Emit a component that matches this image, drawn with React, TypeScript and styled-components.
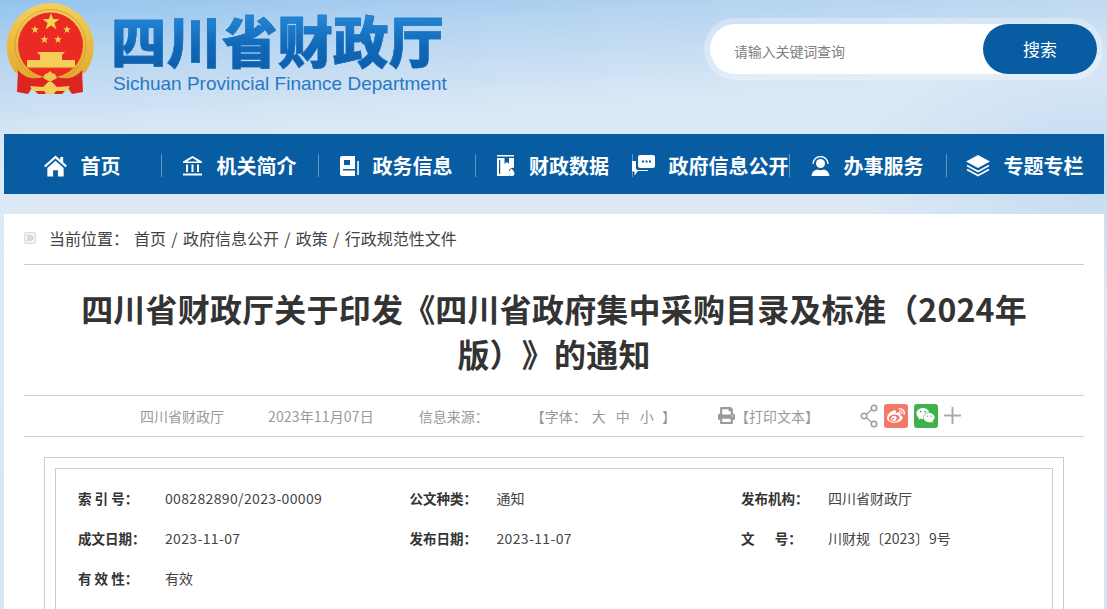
import React from "react";
import styled, { createGlobalStyle } from "styled-components";
import { FaWeibo, FaWeixin, FaPrint } from "react-icons/fa";

const GlobalStyle = createGlobalStyle`
  html, body {
    margin: 0;
    height: 100%;
    overflow: hidden;
  }
  body {
    font-family: "Noto Sans CJK SC", "Liberation Sans", sans-serif;
    text-spacing-trim: space-all;
    background:
      radial-gradient(ellipse 260px 120px at 1107px 170px, rgba(190, 216, 241, 0.9), rgba(190, 216, 241, 0) 100%),
      linear-gradient(176deg, #93c4ee 0%, #b5d4f0 8%, #dae8f6 21%, #dde9f5 34%, #d6e5f4 100%);
    background-repeat: no-repeat;
  }
`;

const navItems = [
  { label: "首页", icon: "home" },
  { label: "机关简介", icon: "bank" },
  { label: "政务信息", icon: "book" },
  { label: "财政数据", icon: "data" },
  { label: "政府信息公开", icon: "chat" },
  { label: "办事服务", icon: "user" },
  { label: "专题专栏", icon: "layers" },
];

const NavIcon = ({ name }: { name: string }) => {
  switch (name) {
    case "home":
      return (
        <svg width="23" height="22" viewBox="0 0 24 22" fill="#fff">
          <path d="M12 0 L17 4.5 V1.5 H20 V7.2 L24 10.8 L22.4 12.4 L12 3.2 L1.6 12.4 L0 10.8 Z" />
          <path d="M12 5.6 L20.5 13 V22 H14.5 V15.5 H9.5 V22 H3.5 V13 Z" />
        </svg>
      );
    case "bank":
      return (
        <svg width="21" height="20" viewBox="0 0 21 20" fill="#fff">
          <path d="M10.5 0 L20 5.5 V7 H1 V5.5 Z M10.5 2 L5.2 5.4 H15.8 Z" fillRule="evenodd" />
          <rect x="4" y="8.5" width="2" height="7.5" />
          <rect x="9.5" y="8.5" width="2" height="7.5" />
          <rect x="15" y="8.5" width="2" height="7.5" />
          <rect x="1" y="17.5" width="19" height="2" />
        </svg>
      );
    case "book":
      return (
        <svg width="19" height="20" viewBox="0 0 19 20" fill="#fff">
          <path
            d="M2 0 H15 V20 H2 A2 2 0 0 1 0 18 V2 A2 2 0 0 1 2 0 Z M4 4 V9 H10 V4 Z M3 13 V14.5 H15 V13 Z"
            fillRule="evenodd"
          />
          <rect x="17.3" y="5" width="1.5" height="14" />
        </svg>
      );
    case "data":
      return (
        <svg width="18" height="21" viewBox="0 0 18 21" fill="#fff">
          <rect x="0" y="0" width="17" height="1.5" />
          <path d="M0 3 H7.5 V9 L10 7 L12 9 V3 H17 V13 A4 4 0 0 0 12 18 V21 H0 Z M2 5 V19 H3.2 V5 Z" fillRule="evenodd" />
          <path d="M14.5 13.5 C16 15.5 17.5 16.5 17.5 18.4 A3 2.7 0 0 1 11.5 18.4 C11.5 16.5 13 15.5 14.5 13.5 Z" />
        </svg>
      );
    case "chat":
      return (
        <svg width="23" height="21" viewBox="0 0 23 21" fill="#fff">
          <path
            d="M8 0 H21 A2 2 0 0 1 23 2 V11 A2 2 0 0 1 21 13 H8 A2 2 0 0 1 6 11 V2 A2 2 0 0 1 8 0 Z M10 5.5 V7.5 H12 V5.5 Z M13.5 5.5 V7.5 H15.5 V5.5 Z M17 5.5 V7.5 H19 V5.5 Z"
            fillRule="evenodd"
          />
          <path d="M0 6 H4 V13 A2 2 0 0 0 6 15 H16 V16 H6 L2.5 20.5 V16.5 H0 Z" />
        </svg>
      );
    case "user":
      return (
        <svg width="19" height="20" viewBox="0 0 19 20" fill="#fff">
          <circle cx="9.5" cy="7.5" r="4.5" />
          <path d="M2 8 A7.5 7.5 0 0 1 17 8" fill="none" stroke="#fff" strokeWidth="1.3" />
          <path d="M0.5 20 C1 15.5 4 14 6.5 13.5 C8 14.6 11 14.6 12.5 13.5 C15 14 18 15.5 18.5 20 Z" />
        </svg>
      );
    default:
      return (
        <svg width="24" height="22" viewBox="0 0 24 22" fill="#fff">
          <path d="M12 0 L24 6.5 L12 13 L0 6.5 Z" />
          <path d="M1 10.5 L12 16.5 L23 10.5" fill="none" stroke="#fff" strokeWidth="1.6" />
          <path d="M1 14.5 L12 20.5 L23 14.5" fill="none" stroke="#fff" strokeWidth="1.6" />
        </svg>
      );
  }
};

const Star = ({ cx, cy, r }: { cx: number; cy: number; r: number }) => {
  const pts: string[] = [];
  for (let i = 0; i < 10; i++) {
    const rad = i % 2 === 0 ? r : r * 0.4;
    const a = (Math.PI / 5) * i - Math.PI / 2;
    pts.push(`${cx + rad * Math.cos(a)},${cy + rad * Math.sin(a)}`);
  }
  return <polygon points={pts.join(" ")} fill="#f7d34f" />;
};

const Emblem = () => (
  <svg width="88" height="94" viewBox="0 0 88 94">
    <defs>
      <linearGradient id="gold" x1="0" y1="0" x2="0" y2="1">
        <stop offset="0" stopColor="#f3cf5c" />
        <stop offset="1" stopColor="#e2a92c" />
      </linearGradient>
    </defs>
    <path d="M8.7 70 A43.6 43.6 0 1 1 79.7 70 L60 78 H28 Z" fill="url(#gold)" />
    <circle cx="44.5" cy="43" r="35.5" fill="none" stroke="#d39c28" strokeWidth="0.8" />
    <circle cx="44.5" cy="43" r="32.5" fill="#ea2a23" />
    <Star cx={45} cy={20} r={9} />
    <Star cx={29} cy={27.5} r={4.2} />
    <Star cx={61} cy={27.5} r={4.2} />
    <Star cx={38.5} cy={37.5} r={4.2} />
    <Star cx={52} cy={37.5} r={4.2} />
    <path d="M31 50 H59 L56 53 V58 H69 V65 H21 V58 H34 V53 Z" fill="#f4cd5a" />
    <rect x="21" y="65" width="48" height="1.2" fill="#d99a22" />
    <path d="M12 68 C18 76 28 78 37 75 L44 79 L51 75 C60 78 70 76 76 68 L77 90 L66 92 L62 86 L56 92 H32 L26 86 L22 92 L11 90 Z" fill="#dc2520" />
    <path d="M37 76 L39 72 L42 71 L44 69 L46 71 L49 72 L51 76 L44 80 Z" fill="#f0c44e" />
    <path d="M24 84 L37 85 L42 80 L46 80 L51 85 L64 84 L61 89 L50 89 L48 92 H40 L38 89 L27 89 Z" fill="#f3cd5b" />
  </svg>
);

const App: React.FC = () => {
  return (
    <>
      <GlobalStyle />
      <Header>
        <LogoArea>
          <Emblem />
          <LogoText>
            <SiteName>四川省财政厅</SiteName>
            <SiteNameEn>Sichuan Provincial Finance Department</SiteNameEn>
          </LogoText>
        </LogoArea>
        <SearchWrap>
          <SearchBox>
            <Placeholder>请输入关键词查询</Placeholder>
            <SearchButton>搜索</SearchButton>
          </SearchBox>
        </SearchWrap>
      </Header>

      <Nav>
        {navItems.map((item, i) => (
          <NavItem key={item.label} $last={i === navItems.length - 1}>
            <NavIconBox>
              <NavIcon name={item.icon} />
            </NavIconBox>
            {item.label}
          </NavItem>
        ))}
      </Nav>

      <Main>
        <Crumbs>
          <CrumbIcon>
            <svg width="8" height="8" viewBox="0 0 8 8" fill="none" stroke="#c8c8c8" strokeWidth="1.4">
              <path d="M1 1 L4 4 L1 7 M4 1 L7 4 L4 7" />
            </svg>
          </CrumbIcon>
          <CrumbLabel>当前位置：</CrumbLabel>
          首页<CrumbSep>/</CrumbSep>政府信息公开<CrumbSep>/</CrumbSep>政策<CrumbSep>/</CrumbSep>行政规范性文件
        </Crumbs>

        <Title>四川省财政厅关于印发《四川省政府集中采购目录及标准（2024年版）》的通知</Title>

        <InfoBar>
          <InfoSource>四川省财政厅</InfoSource>
          <InfoDate>2023年11月07日</InfoDate>
          <InfoOrigin>信息来源：</InfoOrigin>
          <FontSize>
            【字体：<FontOption>大</FontOption>
            <FontOption>中</FontOption>
            <FontOption>小</FontOption> 】
          </FontSize>
          <PrintLink>
            <FaPrint size={17} color="#9a9a9a" />
            【打印文本】
          </PrintLink>
          <ShareRow>
            <svg width="18" height="24" viewBox="0 0 18 24" fill="none" stroke="#9c9c9c" strokeWidth="1.4">
              <circle cx="14" cy="4" r="2.8" />
              <circle cx="4" cy="12" r="2.8" />
              <circle cx="14" cy="20" r="2.8" />
              <path d="M6.3 10.3 L11.7 5.7 M6.3 13.7 L11.7 18.3" />
            </svg>
            <ShareTile $color="#f2796a">
              <FaWeibo size={18} color="#fff" />
            </ShareTile>
            <ShareTile $color="#3fb14a">
              <FaWeixin size={19} color="#fff" />
            </ShareTile>
            <svg width="17" height="17" viewBox="0 0 18 18" fill="#a8a8a8">
              <rect x="0" y="8" width="18" height="2" />
              <rect x="8" y="0" width="2" height="18" />
            </svg>
          </ShareRow>
        </InfoBar>

        <MetaOuter>
          <MetaInner>
            <MetaCell>
              <MetaLabel>索 引 号：</MetaLabel>
              <MetaValue $digits>008282890/2023-00009</MetaValue>
            </MetaCell>
            <MetaCell>
              <MetaLabel>公文种类：</MetaLabel>
              <MetaValue>通知</MetaValue>
            </MetaCell>
            <MetaCell>
              <MetaLabel>发布机构：</MetaLabel>
              <MetaValue>四川省财政厅</MetaValue>
            </MetaCell>
            <MetaCell>
              <MetaLabel>成文日期：</MetaLabel>
              <MetaValue $digits>2023-11-07</MetaValue>
            </MetaCell>
            <MetaCell>
              <MetaLabel>发布日期：</MetaLabel>
              <MetaValue $digits>2023-11-07</MetaValue>
            </MetaCell>
            <MetaCell>
              <MetaLabel>文&emsp;&ensp;号：</MetaLabel>
              <MetaValue>川财规〔2023〕9号</MetaValue>
            </MetaCell>
            <MetaCell>
              <MetaLabel>有 效 性：</MetaLabel>
              <MetaValue>有效</MetaValue>
            </MetaCell>
          </MetaInner>
        </MetaOuter>
      </Main>
    </>
  );
};

const Header = styled.header`
  height: 134px;
  display: flex;
  justify-content: space-between;
  align-items: flex-start;
  padding: 0 4px 0 6px;
  box-sizing: border-box;
`;

const LogoArea = styled.div`
  display: flex;
  gap: 19px;
  padding-top: 2px;
`;

const LogoText = styled.div`
  display: flex;
  flex-direction: column;
`;

const SiteName = styled.div`
  margin: 4px 0 0 -2px;
  font-size: 55.5px;
  line-height: 66px;
  font-weight: 900;
  white-space: nowrap;
  background: linear-gradient(180deg, #2a91df 0%, #1168b8 60%, #0d5ea9 100%);
  -webkit-background-clip: text;
  background-clip: text;
  color: transparent;
  -webkit-text-stroke: 0.5px #1a72c2;
`;

const SiteNameEn = styled.div`
  margin-top: 1px;
  font-family: "Liberation Sans", sans-serif;
  font-size: 19px;
  line-height: 22px;
  color: #2a78c2;
  white-space: nowrap;
`;

const SearchWrap = styled.div`
  margin-top: 18px;
  padding: 6px;
  border-radius: 31px;
  background: rgba(255, 255, 255, 0.3);
`;

const SearchBox = styled.div`
  width: 387px;
  height: 50px;
  border-radius: 25px;
  background: #fff;
  display: flex;
  align-items: center;
  justify-content: space-between;
`;

const Placeholder = styled.span`
  margin: 4px 0 0 24px;
  font-size: 14px;
  letter-spacing: -0.15px;
  color: #808080;
`;

const SearchButton = styled.div`
  width: 114px;
  height: 50px;
  line-height: 50px;
  border-radius: 25px;
  background: #085ca2;
  color: #fff;
  font-size: 17px;
  text-align: center;
`;

const Nav = styled.nav`
  margin: 0 3px 0 4px;
  padding: 3px 0 0 1px;
  box-sizing: border-box;
  height: 60px;
  background: #085ca2;
  display: flex;
  align-items: center;
`;

const NavItem = styled.div<{ $last?: boolean }>`
  width: 157px;
  flex: none;
  height: 23px;
  padding-right: 2px;
  display: flex;
  align-items: center;
  justify-content: center;
  gap: 14px;
  color: #fff;
  font-size: 20px;
  font-weight: 700;
  white-space: nowrap;
  box-sizing: border-box;
  border-right: ${(p) => (p.$last ? "none" : "1px solid rgba(255, 255, 255, 0.35)")};
`;

const NavIconBox = styled.span`
  display: flex;
  flex: none;
`;

const Main = styled.main`
  margin: 20px 3px 0 4px;
  padding: 0 20px;
  background: #fff;
  height: 500px;
  overflow: hidden;
`;

const Crumbs = styled.div`
  height: 48px;
  padding-bottom: 2px;
  display: flex;
  align-items: center;
  border-bottom: 1px solid #ccc;
  font-size: 16px;
  color: #444;
`;

const CrumbIcon = styled.span`
  width: 10px;
  height: 10px;
  border: 1px solid #ddd;
  border-radius: 2px;
  background: #f4f4f4;
  margin-right: 13px;
  display: flex;
  align-items: center;
  justify-content: center;
`;

const CrumbLabel = styled.span`
  margin-right: 5px;
`;

const CrumbSep = styled.span`
  margin: 0 5.3px;
`;

const Title = styled.h1`
  margin: 0;
  padding: 21px 50px 19px;
  font-size: 32px;
  line-height: 45px;
  font-weight: 700;
  letter-spacing: 0.2px;
  color: #333;
  text-align: center;
  border-bottom: 1px solid #ccc;
`;

const InfoBar = styled.div`
  height: 41px;
  padding-bottom: 1px;
  box-sizing: border-box;
  display: flex;
  align-items: center;
  border-bottom: 1px solid #ccc;
  font-size: 14px;
  color: #999;
  white-space: nowrap;
`;

const InfoSource = styled.span`
  margin-left: 116px;
  margin-right: 44px;
`;

const InfoDate = styled.span`
  margin-right: 45px;
  letter-spacing: 0.15px;
`;

const InfoOrigin = styled.span`
  margin-right: 42px;
`;

const FontSize = styled.span`
  margin-right: 42px;
`;

const FontOption = styled.span`
  margin: 0 5px;
`;

const PrintLink = styled.span`
  display: flex;
  align-items: center;
  margin-right: 41px;
`;

const ShareRow = styled.div`
  display: flex;
  align-items: center;
  gap: 6px;
`;

const ShareTile = styled.span<{ $color: string }>`
  width: 24px;
  height: 24px;
  border-radius: 3px;
  background: ${(p) => p.$color};
  display: flex;
  align-items: center;
  justify-content: center;
`;

const MetaOuter = styled.div`
  margin: 20px 20px 0;
  padding: 10px;
  border: 1px solid #ccc;
`;

const MetaInner = styled.div`
  border: 1px solid #ccc;
  height: 300px;
  box-sizing: border-box;
  padding: 9px 0 0 22px;
  display: grid;
  grid-template-columns: repeat(3, 331.5px);
  grid-auto-rows: 40px;
`;

const MetaCell = styled.div`
  display: flex;
  align-items: center;
  font-size: 14px;
  color: #444;
`;

const MetaLabel = styled.span`
  width: 87px;
  flex: none;
  font-size: 13.5px;
  font-weight: 700;
  color: #333;
`;

const MetaValue = styled.span<{ $digits?: boolean }>`
  letter-spacing: ${(p) => (p.$digits ? "0.35px" : "0")};
`;

export default App;
